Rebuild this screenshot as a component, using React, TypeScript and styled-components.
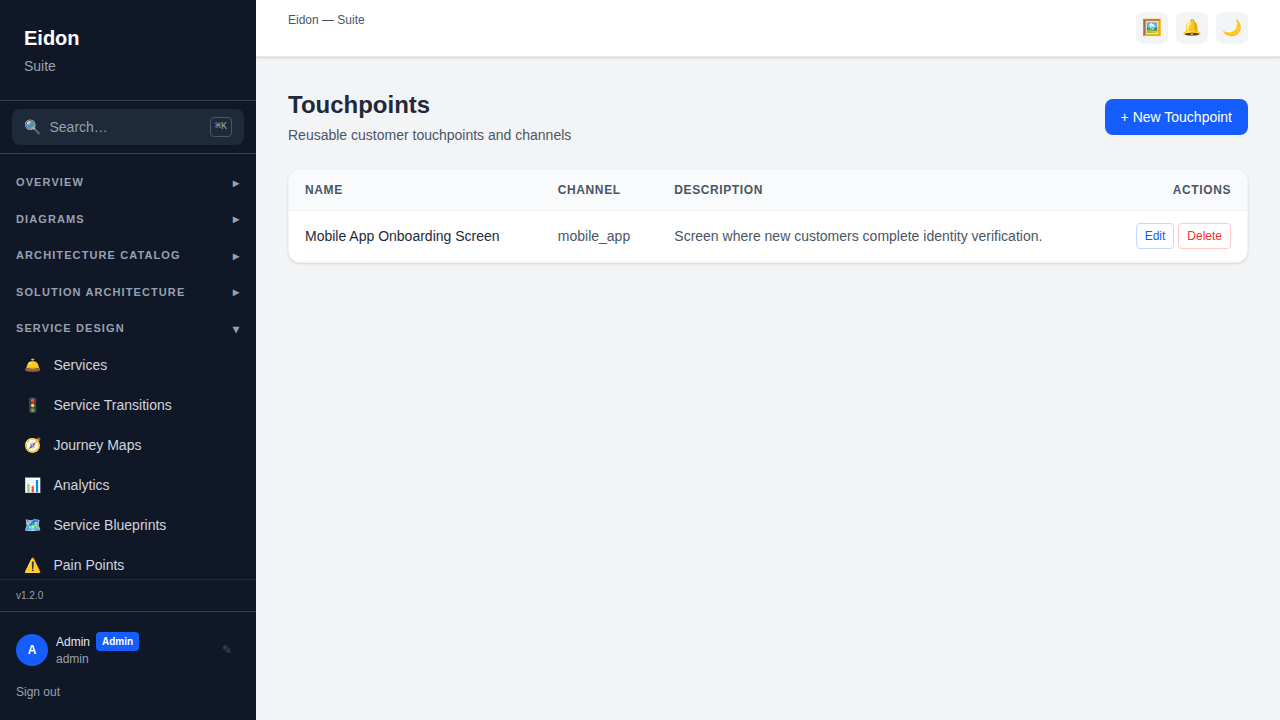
import React from 'react';
import styled, { createGlobalStyle } from 'styled-components';

const GlobalStyle = createGlobalStyle`
  *, *::before, *::after { box-sizing: border-box; }
  body {
    margin: 0;
    font-family: 'Liberation Sans', Arial, sans-serif;
    font-size: 14px;
    line-height: 20px;
    background: #f3f4f6;
    color: #101828;
  }
  h1, h2, p { margin: 0; }
  button { font: inherit; border: 0; margin: 0; cursor: pointer; }
`;

const Shell = styled.div`
  display: flex;
  height: 100vh;
  overflow: hidden;
`;

const Sidebar = styled.aside`
  display: flex;
  flex-direction: column;
  flex: none;
  width: 256px;
  background: #101828;
  color: #fff;
`;

const Brand = styled.div`
  padding: 24px;
  border-bottom: 1px solid #364153;
`;

const BrandName = styled.h1`
  font-size: 20px;
  line-height: 28px;
  font-weight: 700;
`;

const BrandSub = styled.p`
  margin-top: 4px;
  color: #99a1af;
`;

const SearchArea = styled.div`
  padding: 8px 12px;
  border-bottom: 1px solid #364153;
`;

const SearchButton = styled.button`
  display: flex;
  align-items: center;
  gap: 8px;
  width: 100%;
  height: 36px;
  padding: 8px 12px;
  border-radius: 8px;
  background: #1e2939;
  color: #99a1af;
  text-align: left;
`;

const Emoji = styled.span`
  flex: none;
  width: 17.5px;
`;

const SearchLabel = styled.span`
  flex: 1;
`;

const Shortcut = styled.kbd`
  padding: 1px 4px;
  height: 20px;
  border: 1px solid #4a5565;
  border-radius: 4px;
  font-family: 'Liberation Mono', monospace;
  font-size: 10px;
  line-height: 15px;
`;

const Nav = styled.nav`
  flex: 1;
  min-height: 0;
  overflow: hidden;
  padding: 12px 0;
`;

const Section = styled.div`
  margin-bottom: 4px;
`;

const SectionButton = styled.button`
  display: flex;
  align-items: center;
  justify-content: space-between;
  width: 100%;
  padding: 8px 16px;
  background: transparent;
  color: #99a1af;
  font-size: 11px;
  line-height: 16.5px;
  font-weight: 700;
  letter-spacing: 1.1px;
  text-transform: uppercase;
`;

const Caret = styled.span`
  margin: 0.5px 0 -0.5px;
  font-size: 12px;
  line-height: 16px;
`;

const NavItem = styled.a`
  display: flex;
  align-items: center;
  gap: 12px;
  padding: 10px 24px;
  color: #d1d5dc;
`;

const VersionBar = styled.div`
  padding: 8px 16px;
  border-top: 1px solid #1e2939;
  color: #99a1af;
  font-size: 10px;
  line-height: 15px;
`;

const Account = styled.div`
  height: 109px;
  padding: 20px 16px 0;
  border-top: 1px solid #364153;
  font-size: 12px;
  line-height: 16px;
`;

const Profile = styled.div`
  display: flex;
  align-items: center;
  gap: 8px;
`;

const Avatar = styled.div`
  display: flex;
  align-items: center;
  justify-content: center;
  width: 32px;
  height: 32px;
  border-radius: 50%;
  background: #155dfc;
  font-weight: 700;
`;

const Identity = styled.div`
  flex: 1;
`;

const NameRow = styled.div`
  display: flex;
  align-items: center;
  gap: 6px;
  color: #e5e7eb;
`;

const RoleBadge = styled.span`
  padding: 2px 6px;
  border-radius: 4px;
  background: #155dfc;
  color: #fff;
  font-size: 10px;
  line-height: 15px;
  font-weight: 700;
`;

const Login = styled.p`
  color: #99a1af;
`;

const EditProfile = styled.button`
  padding: 4px 8px;
  background: transparent;
  color: #4a5565;
  font-size: 12px;
  line-height: 16px;
`;

const SignOut = styled.button`
  display: block;
  margin-top: 17px;
  padding: 0;
  background: transparent;
  color: #99a1af;
`;

const Content = styled.div`
  display: flex;
  flex-direction: column;
  flex: 1;
  min-width: 0;
`;

const TopBar = styled.header`
  display: flex;
  justify-content: space-between;
  align-items: flex-start;
  height: 57px;
  padding: 12px 32px;
  background: #fff;
  border-bottom: 1px solid #e5e7eb;
  box-shadow: 0 1px 3px rgb(0 0 0 / 0.1), 0 1px 2px -1px rgb(0 0 0 / 0.1);
`;

const Crumb = styled.span`
  color: #4a5565;
  font-size: 12px;
  line-height: 16px;
`;

const TopActions = styled.div`
  display: flex;
  gap: 8px;
`;

const IconButton = styled.button`
  display: flex;
  align-items: center;
  justify-content: center;
  width: 32px;
  height: 32px;
  padding: 0;
  border-radius: 8px;
  background: #f3f4f6;
  font-size: 16px;
  line-height: 24px;
`;

const Page = styled.main`
  padding: 32px;
`;

const PageHeader = styled.div`
  display: flex;
  align-items: center;
  justify-content: space-between;
  margin-bottom: 24px;
`;

const PageTitle = styled.h2`
  font-size: 24px;
  line-height: 32px;
  font-weight: 700;
  color: #1e2939;
`;

const PageSub = styled.p`
  margin-top: 4px;
  color: #4a5565;
`;

const PrimaryButton = styled.button`
  padding: 8px 16px;
  border-radius: 8px;
  background: #155dfc;
  color: #fff;
`;

const Card = styled.div`
  overflow: hidden;
  border: 1px solid #f3f4f6;
  border-radius: 12px;
  background: #fff;
  box-shadow: 0 1px 3px rgb(0 0 0 / 0.1), 0 1px 2px -1px rgb(0 0 0 / 0.1);
`;

const Table = styled.table`
  width: 100%;
  border-spacing: 0;
  table-layout: fixed;
`;

const HeadCell = styled.th<{ $width?: string; $right?: boolean }>`
  width: ${(p) => p.$width ?? 'auto'};
  padding: 12px 16px;
  border-bottom: 1px solid #f3f4f6;
  background: #f9fafb;
  color: #4a5565;
  font-size: 12px;
  line-height: 16px;
  font-weight: 700;
  letter-spacing: 0.6px;
  text-transform: uppercase;
  text-align: ${(p) => (p.$right ? 'right' : 'left')};
`;

const Cell = styled.td<{ $strong?: boolean }>`
  height: 51px;
  padding: 12px 16px;
  border-bottom: 1px solid #f9fafb;
  color: ${(p) => (p.$strong ? '#1e2939' : '#4a5565')};
  white-space: nowrap;
`;

const RowActions = styled.div`
  display: flex;
  justify-content: flex-end;
  gap: 4px;
`;

const RowButton = styled.button<{ $danger?: boolean }>`
  padding: 4px 8px;
  border: 1px solid ${(p) => (p.$danger ? '#ffc9c9' : '#bedbff')};
  border-radius: 4px;
  background: transparent;
  color: ${(p) => (p.$danger ? '#fb2c36' : '#155dfc')};
  font-size: 12px;
  line-height: 16px;
`;

const sections = [
  { label: 'Overview', open: false },
  { label: 'Diagrams', open: false },
  { label: 'Architecture Catalog', open: false },
  { label: 'Solution Architecture', open: false },
  { label: 'Service Design', open: true },
];

const items = [
  { icon: '🛎️', label: 'Services' },
  { icon: '🚦', label: 'Service Transitions' },
  { icon: '🧭', label: 'Journey Maps' },
  { icon: '📊', label: 'Analytics' },
  { icon: '🗺️', label: 'Service Blueprints' },
  { icon: '⚠️', label: 'Pain Points' },
];

const touchpoints = [
  {
    name: 'Mobile App Onboarding Screen',
    channel: 'mobile_app',
    description: 'Screen where new customers complete identity verification.',
  },
];

export default function App() {
  return (
    <>
      <GlobalStyle />
      <Shell>
        <Sidebar>
          <Brand>
            <BrandName>Eidon</BrandName>
            <BrandSub>Suite</BrandSub>
          </Brand>
          <SearchArea>
            <SearchButton>
              <Emoji>🔍</Emoji>
              <SearchLabel>Search…</SearchLabel>
              <Shortcut>⌘K</Shortcut>
            </SearchButton>
          </SearchArea>
          <Nav>
            {sections.map((s) => (
              <Section key={s.label}>
                <SectionButton>
                  <span>{s.label}</span>
                  <Caret>{s.open ? '▾' : '▸'}</Caret>
                </SectionButton>
                {s.open &&
                  items.map((i) => (
                    <NavItem key={i.label}>
                      <Emoji>{i.icon}</Emoji>
                      <span>{i.label}</span>
                    </NavItem>
                  ))}
              </Section>
            ))}
          </Nav>
          <VersionBar>v1.2.0</VersionBar>
          <Account>
            <Profile>
              <Avatar>A</Avatar>
              <Identity>
                <NameRow>
                  <span>Admin</span>
                  <RoleBadge>Admin</RoleBadge>
                </NameRow>
                <Login>admin</Login>
              </Identity>
              <EditProfile>✎</EditProfile>
            </Profile>
            <SignOut>Sign out</SignOut>
          </Account>
        </Sidebar>
        <Content>
          <TopBar>
            <Crumb>Eidon — Suite</Crumb>
            <TopActions>
              <IconButton>🖼️</IconButton>
              <IconButton>🔔</IconButton>
              <IconButton>🌙</IconButton>
            </TopActions>
          </TopBar>
          <Page>
            <PageHeader>
              <div>
                <PageTitle>Touchpoints</PageTitle>
                <PageSub>Reusable customer touchpoints and channels</PageSub>
              </div>
              <PrimaryButton>+ New Touchpoint</PrimaryButton>
            </PageHeader>
            <Card>
              <Table>
                <thead>
                  <tr>
                    <HeadCell $width="252.8px">Name</HeadCell>
                    <HeadCell $width="116.5px">Channel</HeadCell>
                    <HeadCell>Description</HeadCell>
                    <HeadCell $width="150px" $right>
                      Actions
                    </HeadCell>
                  </tr>
                </thead>
                <tbody>
                  {touchpoints.map((t) => (
                    <tr key={t.name}>
                      <Cell $strong>{t.name}</Cell>
                      <Cell>{t.channel}</Cell>
                      <Cell>{t.description}</Cell>
                      <Cell>
                        <RowActions>
                          <RowButton>Edit</RowButton>
                          <RowButton $danger>Delete</RowButton>
                        </RowActions>
                      </Cell>
                    </tr>
                  ))}
                </tbody>
              </Table>
            </Card>
          </Page>
        </Content>
      </Shell>
    </>
  );
}
